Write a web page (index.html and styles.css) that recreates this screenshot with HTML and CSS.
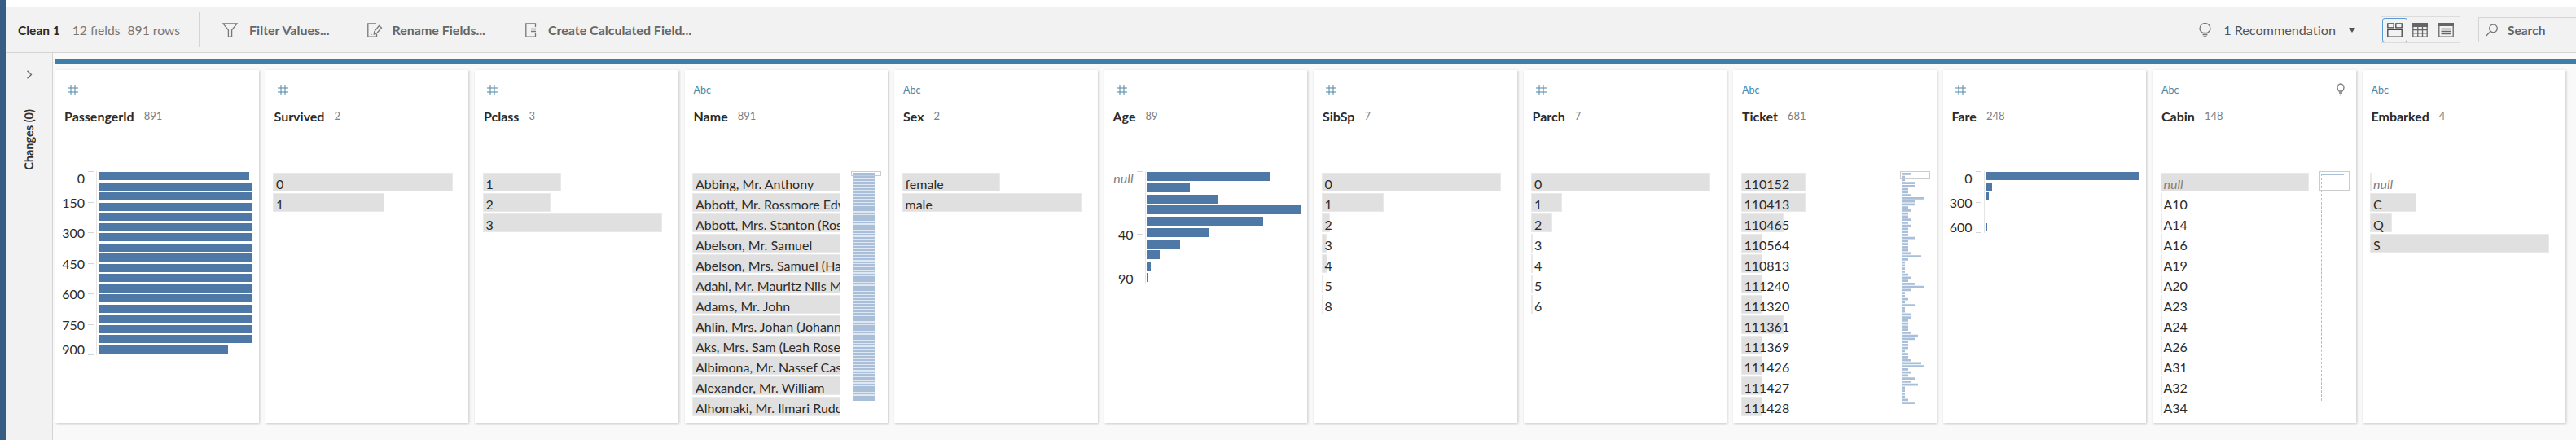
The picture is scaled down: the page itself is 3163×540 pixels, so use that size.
FILE: index.html
```html
<!DOCTYPE html>
<html lang="en">
<head>
  <meta charset="UTF-8">
  <title>Clean 1</title>
  <link rel="stylesheet" href="styles.css">
</head>
<body>
  <div class="edge"></div>
  <div class="main">
    <div class="toolbar">
      <span class="step-name">Clean 1</span>
      <span class="step-meta">12 fields</span>
      <span class="step-meta step-rows">891 rows</span>
      <span class="tool-sep"></span>
      <span class="tool tool-filter">
        <svg width="19" height="18" viewBox="0 0 19 18"><path d="M.8.8h17.4l-6.6 8v8.4H7.4V8.800z"/></svg>
        Filter Values...
      </span>
      <span class="tool tool-rename">
        <svg width="19" height="18" viewBox="0 0 19 18"><path d="M11 .8H.8v16.400h10.400M11.500 14v3.200M14.500 3.500l3 2.500-6 7-3.200 1 .4-3.300zM5 14.500h.5"/></svg>
        Rename Fields...
      </span>
      <span class="tool tool-create">
        <svg width="14" height="18" viewBox="0 0 14 18"><path d="M12.500 5V.8H.8v16.400h11.700V13M7 7.500h6M7 10.500h6"/></svg>
        Create Calculated Field...
      </span>
      <span class="reco">
        <svg width="15" height="18" viewBox="0 0 15 18"><path d="M5 12.500C3 11.300 1 9.800 1 7a6.500 6.500 0 0 1 13 0c0 2.800-2 4.300-4 5.500zM4.500 14.500h6M5.500 16.800h4"/></svg>
        <span class="reco-text">1 Recommendation</span>
        <span class="caret"></span>
      </span>
      <span class="views">
        <span class="view view-on">
          <svg width="19" height="18" viewBox="0 0 19 18"><path d="M.8.800h7.400v5H.8zM10.800.800h7.400v5h-7.400zM.8 8.300h17.400v8.900H.8z"/></svg>
        </span>
        <span class="view">
          <svg width="19" height="18" viewBox="0 0 19 18"><path class="view-fill" d="M0 0h19v5H0z"/><path d="M.8.800h17.400v16.400H.8zM.8 8.500h17.400M.8 12.800h17.400M6.800 5v12M12.500 5v12"/></svg>
        </span>
        <span class="view-sep"></span>
        <span class="view">
          <svg width="19" height="18" viewBox="0 0 19 18"><path class="view-fill" d="M0 0h19v4H0z"/><path d="M.8.800h17.400v16.400H.8zM3.500 7.500h12M3.500 10.500h12M3.500 13.500h12"/></svg>
        </span>
      </span>
      <span class="search">
        <svg width="15" height="16" viewBox="0 0 15 16"><circle cx="9.500" cy="5.800" r="4.800"/><path class="search-handle" d="M6 9.500L.8 15"/></svg>
        Search
      </span>
    </div>
    <div class="work">
      <div class="rail">
        <svg class="rail-chevron" width="8" height="11" viewBox="0 0 8 11"><path d="M1.500.8l5 4.700-5 4.700"/></svg>
        <span class="rail-title">Changes (0)</span>
      </div>
      <div class="canvas">
        <div class="strip"></div>
        <div class="cards">

          <div class="card">
            <div class="head">
              <div class="head-top"><svg class="hash" width="13" height="13" viewBox="0 0 13 13"><path d="M4 0v13M9 0v13M0 4h13M0 9h13"/></svg></div>
              <div class="field"><b>PassengerId</b><span>891</span></div>
            </div>
            <div class="hist">
              <div class="axis">
                <div class="tick"><span>0</span><i></i></div>
                <div class="tick" style="margin-top:36.500px"><span>150</span><i></i></div>
                <div class="tick" style="margin-top:36.500px"><span>300</span><i></i></div>
                <div class="tick" style="margin-top:36.500px"><span>450</span><i></i></div>
                <div class="tick" style="margin-top:36.500px"><span>600</span><i></i></div>
                <div class="tick" style="margin-top:36.500px"><span>750</span><i></i></div>
                <div class="tick" style="margin-top:36.500px"><span>900</span><i></i></div>
              </div>
              <div class="bars">
                <div class="bar" style="width:185px"></div>
                <div class="bar" style="width:189px"></div>
                <div class="bar" style="width:189px"></div>
                <div class="bar" style="width:189px"></div>
                <div class="bar" style="width:189px"></div>
                <div class="bar" style="width:189px"></div>
                <div class="bar" style="width:189px"></div>
                <div class="bar" style="width:189px"></div>
                <div class="bar" style="width:189px"></div>
                <div class="bar" style="width:189px"></div>
                <div class="bar" style="width:189px"></div>
                <div class="bar" style="width:189px"></div>
                <div class="bar" style="width:189px"></div>
                <div class="bar" style="width:189px"></div>
                <div class="bar" style="width:189px"></div>
                <div class="bar" style="width:189px"></div>
                <div class="bar" style="width:189px"></div>
                <div class="bar" style="width:159px"></div>
              </div>
            </div>
          </div>

          <div class="card">
            <div class="head">
              <div class="head-top"><svg class="hash" width="13" height="13" viewBox="0 0 13 13"><path d="M4 0v13M9 0v13M0 4h13M0 9h13"/></svg></div>
              <div class="field"><b>Survived</b><span>2</span></div>
            </div>
            <div class="list">
              <div class="rows">
                <div class="row" style="width:221px">0</div>
                <div class="row" style="width:137px">1</div>
              </div>
            </div>
          </div>

          <div class="card">
            <div class="head">
              <div class="head-top"><svg class="hash" width="13" height="13" viewBox="0 0 13 13"><path d="M4 0v13M9 0v13M0 4h13M0 9h13"/></svg></div>
              <div class="field"><b>Pclass</b><span>3</span></div>
            </div>
            <div class="list">
              <div class="rows">
                <div class="row" style="width:96px">1</div>
                <div class="row" style="width:83px">2</div>
                <div class="row" style="width:220px">3</div>
              </div>
            </div>
          </div>

          <div class="card">
            <div class="head">
              <div class="head-top"><span class="abc">Abc</span></div>
              <div class="field"><b>Name</b><span>891</span></div>
            </div>
            <div class="list">
              <div class="rows rows-clip">
                <div class="row">Abbing, Mr. Anthony</div>
                <div class="row">Abbott, Mr. Rossmore Edward</div>
                <div class="row">Abbott, Mrs. Stanton (Rosa Hunt)</div>
                <div class="row">Abelson, Mr. Samuel</div>
                <div class="row">Abelson, Mrs. Samuel (Hannah Wizosky)</div>
                <div class="row">Adahl, Mr. Mauritz Nils Martin</div>
                <div class="row">Adams, Mr. John</div>
                <div class="row">Ahlin, Mrs. Johan (Johanna Persdotter)</div>
                <div class="row">Aks, Mrs. Sam (Leah Rosen)</div>
                <div class="row">Albimona, Mr. Nassef Cassem</div>
                <div class="row">Alexander, Mr. William</div>
                <div class="row">Alhomaki, Mr. Ilmari Rudolf</div>
              </div>
              <div class="minimap">
                <div class="minimap-box"></div>
                <div class="stripes"></div>
              </div>
            </div>
          </div>

          <div class="card">
            <div class="head">
              <div class="head-top"><span class="abc">Abc</span></div>
              <div class="field"><b>Sex</b><span>2</span></div>
            </div>
            <div class="list">
              <div class="rows">
                <div class="row" style="width:120px">female</div>
                <div class="row" style="width:220px">male</div>
              </div>
            </div>
          </div>

          <div class="card">
            <div class="head">
              <div class="head-top"><svg class="hash" width="13" height="13" viewBox="0 0 13 13"><path d="M4 0v13M9 0v13M0 4h13M0 9h13"/></svg></div>
              <div class="field"><b>Age</b><span>89</span></div>
            </div>
            <div class="hist">
              <div class="axis">
                <div class="tick tick-null"><span>null</span><i></i></div>
                <div class="tick" style="margin-top:76px"><span>40</span><i></i></div>
                <div class="tick" style="margin-top:60px"><span>90</span><i></i></div>
              </div>
              <div class="bars bars-tall">
                <div class="bar" style="width:152px"></div>
                <div class="bar" style="width:53px"></div>
                <div class="bar" style="width:87px"></div>
                <div class="bar" style="width:189px"></div>
                <div class="bar" style="width:143px"></div>
                <div class="bar" style="width:76px"></div>
                <div class="bar" style="width:41px"></div>
                <div class="bar" style="width:16px"></div>
                <div class="bar" style="width:5px"></div>
                <div class="bar" style="width:2px"></div>
              </div>
            </div>
          </div>

          <div class="card">
            <div class="head">
              <div class="head-top"><svg class="hash" width="13" height="13" viewBox="0 0 13 13"><path d="M4 0v13M9 0v13M0 4h13M0 9h13"/></svg></div>
              <div class="field"><b>SibSp</b><span>7</span></div>
            </div>
            <div class="list">
              <div class="rows">
                <div class="row" style="width:220px">0</div>
                <div class="row" style="width:76px">1</div>
                <div class="row" style="width:10px">2</div>
                <div class="row" style="width:6px">3</div>
                <div class="row" style="width:7px">4</div>
                <div class="row" style="width:2px">5</div>
                <div class="row" style="width:2px">8</div>
              </div>
            </div>
          </div>

          <div class="card">
            <div class="head">
              <div class="head-top"><svg class="hash" width="13" height="13" viewBox="0 0 13 13"><path d="M4 0v13M9 0v13M0 4h13M0 9h13"/></svg></div>
              <div class="field"><b>Parch</b><span>7</span></div>
            </div>
            <div class="list">
              <div class="rows">
                <div class="row" style="width:220px">0</div>
                <div class="row" style="width:38px">1</div>
                <div class="row" style="width:26px">2</div>
                <div class="row" style="width:2px">3</div>
                <div class="row" style="width:2px">4</div>
                <div class="row" style="width:2px">5</div>
                <div class="row" style="width:2px">6</div>
              </div>
            </div>
          </div>

          <div class="card">
            <div class="head">
              <div class="head-top"><span class="abc">Abc</span></div>
              <div class="field"><b>Ticket</b><span>681</span></div>
            </div>
            <div class="list">
              <div class="rows">
                <div class="row" style="width:79px">110152</div>
                <div class="row" style="width:79px">110413</div>
                <div class="row" style="width:52px">110465</div>
                <div class="row" style="width:26px">110564</div>
                <div class="row" style="width:26px">110813</div>
                <div class="row" style="width:26px">111240</div>
                <div class="row" style="width:26px">111320</div>
                <div class="row" style="width:52px">111361</div>
                <div class="row" style="width:26px">111369</div>
                <div class="row" style="width:26px">111426</div>
                <div class="row" style="width:26px">111427</div>
                <div class="row" style="width:26px">111428</div>
              </div>
              <div class="minimap">
                <div class="minimap-box minimap-box-ticket"></div>
                <svg class="ticket-bars" width="28" height="285" viewBox="0 0 28 285">
                  <path d="M0 1.400H12M0 5.150H4M0 8.900H4M0 12.650H16M0 16.400H16M0 20.150H8M0 23.900H8M0 27.650H12M0 31.400H28M0 35.150H16M0 38.900H16M0 42.650H8M0 46.400H12M0 50.150H8M0 53.900H8M0 57.650H12M0 61.400H8M0 65.150H12M0 68.900H8M0 72.650H8M0 76.400H8M0 80.150H16M0 83.900H8M0 87.650H8M0 91.400H8M0 95.150H8M0 98.900H12M0 102.650H24M0 106.400H8M0 110.150H4M0 113.900H4M0 117.650H4M0 121.400H4M0 125.150H8M0 128.900H12M0 132.650H8M0 136.400H16M0 140.150H28"/>
                  <path d="M0 143.900H12M0 147.650H4M0 151.400H4M0 155.150H8M0 158.900H4M0 162.650H16M0 166.400H4M0 170.150H4M0 173.900H12M0 177.650H12M0 181.400H8M0 185.150H8M0 188.900H8M0 192.650H8M0 196.400H12M0 200.150H20M0 203.900H16M0 207.650H8M0 211.400H8M0 215.150H8M0 218.900H4M0 222.650H8M0 226.400H8M0 230.150H12M0 233.900H24M0 237.650H28M0 241.400H8M0 245.150H12M0 248.900H8M0 252.650H16M0 256.400H12M0 260.150H20M0 263.900H4M0 267.650H4M0 271.400H4M0 275.150H4M0 278.900H8M0 282.650H16"/>
                </svg>
              </div>
            </div>
          </div>

          <div class="card">
            <div class="head">
              <div class="head-top"><svg class="hash" width="13" height="13" viewBox="0 0 13 13"><path d="M4 0v13M9 0v13M0 4h13M0 9h13"/></svg></div>
              <div class="field"><b>Fare</b><span>248</span></div>
            </div>
            <div class="hist">
              <div class="axis">
                <div class="tick"><span>0</span><i></i></div>
                <div class="tick" style="margin-top:37px"><span>300</span><i></i></div>
                <div class="tick" style="margin-top:36px"><span>600</span><i></i></div>
              </div>
              <div class="bars">
                <div class="bar" style="width:189px"></div>
                <div class="bar" style="width:8px"></div>
                <div class="bar" style="width:4px"></div>
                <div class="bar" style="width:0"></div>
                <div class="bar" style="width:0"></div>
                <div class="bar" style="width:2px"></div>
              </div>
            </div>
          </div>

          <div class="card">
            <div class="head">
              <div class="head-top">
                <span class="abc">Abc</span>
                <svg class="card-bulb" width="10" height="16" viewBox="0 0 10 16"><path d="M3 10C1.800 9 1 7.800 1 5.500a4 4.500 0 0 1 8 0C9 7.800 8.200 9 7 10zM3 12h4M4 14.500h2"/></svg>
              </div>
              <div class="field"><b>Cabin</b><span>148</span></div>
            </div>
            <div class="list">
              <div class="rows rows-clip">
                <div class="row row-null">null</div>
                <div class="row" style="width:2px">A10</div>
                <div class="row" style="width:2px">A14</div>
                <div class="row" style="width:2px">A16</div>
                <div class="row" style="width:2px">A19</div>
                <div class="row" style="width:2px">A20</div>
                <div class="row" style="width:2px">A23</div>
                <div class="row" style="width:2px">A24</div>
                <div class="row" style="width:2px">A26</div>
                <div class="row" style="width:2px">A31</div>
                <div class="row" style="width:2px">A32</div>
                <div class="row" style="width:2px">A34</div>
              </div>
              <div class="minimap">
                <div class="minimap-box minimap-box-cabin"></div>
                <div class="cabin-line"></div>
              </div>
            </div>
          </div>

          <div class="card">
            <div class="head">
              <div class="head-top"><span class="abc">Abc</span></div>
              <div class="field"><b>Embarked</b><span>4</span></div>
            </div>
            <div class="list">
              <div class="rows">
                <div class="row row-null" style="width:2px">null</div>
                <div class="row" style="width:57px">C</div>
                <div class="row" style="width:27px">Q</div>
                <div class="row" style="width:220px">S</div>
              </div>
            </div>
          </div>

        </div>
      </div>
    </div>
  </div>
</body>
</html>
```

FILE: styles.css
```css
* {
  box-sizing: border-box;
}
html, body {
  height: 100%;
}
body {
  margin: 0;
  display: flex;
  background-color: #fff;
  color: #2b2b2b;
  font-family: Lato, "Open Sans", sans-serif;
  overflow: hidden;
}
svg {
  display: block;
  fill: none;
  stroke: #777;
  stroke-width: 1.300;
}

.edge {
  width: 7px;
  flex: none;
  background-color: #385c82;
}
.main {
  flex: 1;
  min-width: 0;
  display: flex;
  flex-direction: column;
  padding-top: 9px;
}

/* top toolbar */
.toolbar {
  height: 56px;
  flex: none;
  display: flex;
  align-items: center;
  padding-left: 15px;
  background-color: #f2f2f2;
  border-bottom: 1px solid #d4d4d4;
}
.step-name {
  font-weight: 700;
  font-size: 15.500px;
  margin-right: 15px;
}
.step-meta {
  color: #777;
  font-size: 15.700px;
}
.step-rows {
  margin-left: 9px;
}
.tool-sep {
  width: 1px;
  height: 43px;
  background-color: #d4d4d4;
  margin: 0 28px 0 23px;
}
.tool {
  display: flex;
  align-items: center;
  gap: 14px;
  font-weight: 700;
  font-size: 16px;
  color: #666;
}
.tool-rename {
  margin-left: 47px;
  gap: 11px;
}
.tool-create {
  margin-left: 49px;
  gap: 14px;
}
.reco {
  display: flex;
  align-items: center;
  margin-left: auto;
  color: #555;
  font-size: 16.200px;
}
.reco-text {
  margin-left: 15px;
}
.caret {
  width: 0;
  height: 0;
  margin-left: 16px;
  border-left: 4.500px solid transparent;
  border-right: 4.500px solid transparent;
  border-top: 6px solid #555;
}
.views {
  display: flex;
  align-items: center;
  height: 33px;
  margin-left: 31px;
  padding: 0 1px;
  border: 1px solid #dcdcdc;
}
.view {
  width: 31px;
  height: 30px;
  display: flex;
  align-items: center;
  justify-content: center;
}
.view svg {
  stroke: #666;
}
.view .view-fill {
  fill: #666;
  stroke: none;
}
.view-on {
  border: 1px solid #5b9bd5;
  border-radius: 3px;
}
.view-on svg {
  stroke: #444;
}
.view-sep {
  width: 1px;
  height: 26px;
  background-color: #dcdcdc;
}
.search {
  width: 120px;
  height: 31px;
  flex: none;
  display: flex;
  align-items: center;
  gap: 12px;
  margin-left: 22px;
  padding-left: 8px;
  border: 1px solid #d4d4d4;
  border-right: none;
  font-weight: 700;
  font-size: 15.500px;
  color: #666;
}

/* side rail with the changes pane */
.work {
  flex: 1;
  display: flex;
  min-height: 0;
}
.rail {
  width: 58px;
  flex: none;
  display: flex;
  flex-direction: column;
  align-items: center;
  padding-top: 21px;
  background-color: #f2f2f2;
  border-right: 1px solid #d4d4d4;
}
.rail-chevron {
  stroke: #666;
}
.rail-title {
  margin-top: 37px;
  writing-mode: vertical-rl;
  transform: rotate(180deg);
  font-weight: 700;
  font-size: 14.500px;
  color: #333;
}

/* profile cards */
.canvas {
  flex: 1;
  min-width: 0;
  padding: 8px 0 0 3px;
  background-color: #f9f9f9;
}
.strip {
  height: 6px;
  background-color: #3d7fa8;
  margin-bottom: 7px;
}
.cards {
  display: grid;
  grid-template-columns: repeat(12, 1fr);
  gap: 8px;
  padding-right: 13px;
}
.card {
  height: 433px;
  padding: 0 8px 0 7px;
  background-color: #fff;
  box-shadow: 1px 1px 3px rgba(0, 0, 0, .2);
  min-width: 0;
}
.head {
  height: 79px;
  padding: 17px 0 0 4px;
  border-bottom: 1px solid #d4d4d4;
}
.head-top {
  height: 14px;
  display: flex;
  align-items: center;
  justify-content: space-between;
}
.hash {
  margin-left: 4px;
  stroke: #4d87a8;
  stroke-width: 1;
}
.abc {
  font-size: 12.500px;
  color: #4d87a8;
}
.card-bulb {
  margin-right: 6px;
}
.field {
  display: flex;
  align-items: center;
  gap: 12px;
  height: 20px;
  margin-top: 15px;
}
.field b {
  font-size: 16px;
}
.field span {
  font-size: 13px;
  color: #808080;
}

/* value rows */
.list {
  display: flex;
  justify-content: space-between;
  margin-top: 45px;
}
.rows {
  padding: 2px 0 0 2.500px;
  display: flex;
  flex-direction: column;
  gap: 2px;
}
.rows-clip {
  width: 184.500px;
}
.row {
  height: 23px;
  background-color: #e0e0e0;
  border: 1px solid #e9e9e9;
  font-size: 16px;
  line-height: 25px;
  white-space: nowrap;
  text-indent: 3px;
}
.rows-clip .row {
  overflow: hidden;
}
.rows-clip .row[style] {
  overflow: visible;
}
.row-null {
  font-style: italic;
  color: #808080;
}

/* mini scrollers beside long lists */
.minimap {
  position: relative;
  width: 37px;
  flex: none;
}
.minimap-box {
  position: absolute;
  top: 0;
  left: 0;
  right: 0;
  height: 6px;
  border: 1px solid #ccc;
}
.minimap-box-ticket {
  height: 10px;
}
.minimap-box-cabin {
  height: 24px;
}
.stripes {
  width: 28px;
  height: 280px;
  margin: 2px 0 0 2px;
  background: repeating-linear-gradient(#a9bfd9 0, #a9bfd9 2.500px, #dfe7f0 2.500px, #dfe7f0 3.750px);
}
.ticket-bars {
  margin: 2px 0 0 2px;
  stroke: #a9bfd9;
  stroke-width: 2.800;
}
.cabin-line {
  width: 28px;
  height: 279px;
  margin: 3px 0 0 2px;
  border-top: 2px solid #a9bfd9;
  border-left: 1px dashed #a9bfd9;
}

/* histograms */
.hist {
  display: flex;
  margin-top: 45px;
}
.axis {
  width: 40px;
  flex: none;
}
.tick {
  height: 1px;
  display: flex;
  align-items: center;
  justify-content: flex-end;
  gap: 4px;
}
.tick i {
  width: 7px;
  height: 1px;
  background-color: #d4d4d4;
}
.tick span {
  font-size: 16px;
}
.tick:first-child span {
  transform: translateY(8px);
}
.tick:last-child span {
  transform: translateY(-7px);
}
.tick-null span {
  font-style: italic;
  color: #808080;
}
.bars {
  display: flex;
  flex-direction: column;
  gap: 2.500px;
  margin-left: 3px;
  padding: 1px 0 0 1.500px;
  border-left: 1px solid #e6e6e6;
}
.bar {
  height: 10px;
  background-color: #4e79a7;
}
.bars-tall {
  gap: 2.750px;
}
.bars-tall .bar {
  height: 11px;
}
```
